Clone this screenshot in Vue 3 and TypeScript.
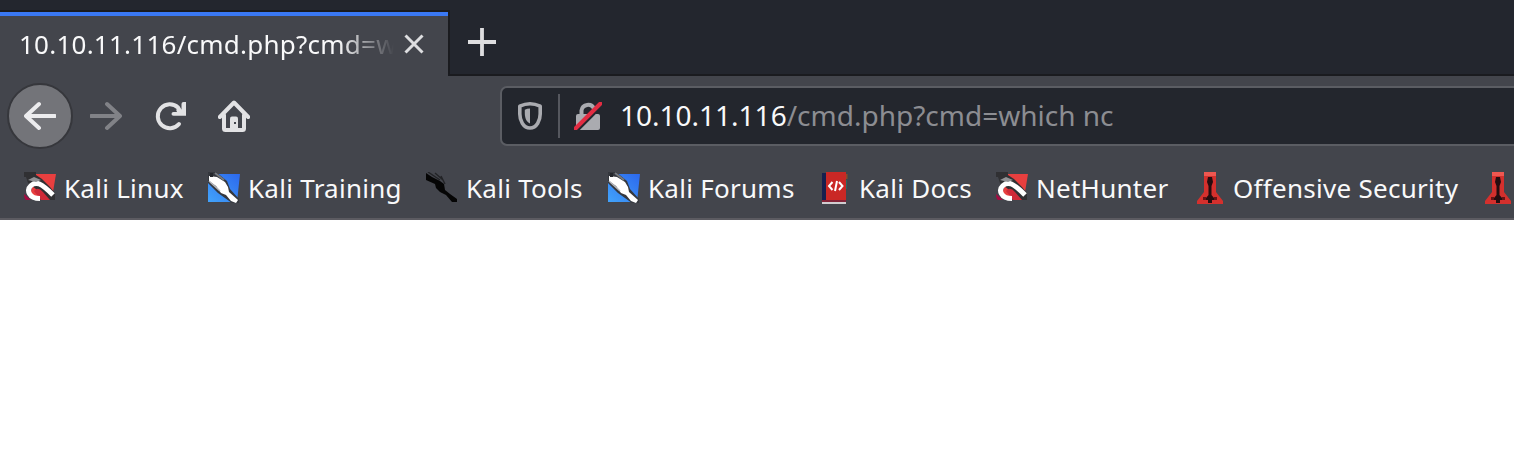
<script setup lang="ts">
type BookmarkIcon = 'hunter' | 'dragon' | 'tools' | 'book' | 'tower'

interface Bookmark {
  label: string
  icon: BookmarkIcon
  width: number
}

const bookmarks: Bookmark[] = [
  { label: 'Kali Linux', icon: 'hunter', width: 184 },
  { label: 'Kali Training', icon: 'dragon', width: 218 },
  { label: 'Kali Tools', icon: 'tools', width: 182 },
  { label: 'Kali Forums', icon: 'dragon', width: 211 },
  { label: 'Kali Docs', icon: 'book', width: 177 },
  { label: 'NetHunter', icon: 'hunter', width: 197 },
  { label: 'Offensive Security', icon: 'tower', width: 288 },
  { label: '', icon: 'tower', width: 40 },
]
</script>

<template>
  <div class="browser">
    <header class="tabs">
      <div class="tab">
        <span class="tab-title">10.10.11.116/cmd.php?cmd=w</span>
        <svg class="close" viewBox="0 0 20 20"><path d="M1.5 1.5 18.5 18.5M18.5 1.5 1.5 18.5" /></svg>
      </div>
      <svg class="plus" viewBox="0 0 28 28"><path d="M14 0V28M0 14H28" /></svg>
    </header>

    <nav class="toolbar">
      <button class="back" aria-label="Back">
        <svg viewBox="0 0 32 32"><path d="M31 16H2M15 4 2 16 15 28" /></svg>
      </button>
      <svg class="forward" viewBox="0 0 32 32"><path d="M1 16H30M17 4 30 16 17 28" /></svg>
      <svg class="reload" viewBox="0 0 32 32">
        <path class="line" d="M24 24A12 12 0 1 1 23 7.5L25 11" />
        <path class="solid" d="M31 2V15.8H18.5Q16.5 15.8 16.5 14T18.5 12H22L21 9.5H26.5V4Q26.5 2 28.5 2Z" />
      </svg>
      <svg class="home" viewBox="0 0 32 32">
        <path class="line" d="M1.8 17 16 2.5 30.2 17M6 15V28.5Q6 30 7.5 30H24.5Q26 30 26 28.5V15" />
        <path class="solid" d="M12 31V18.5Q12 16.5 14 16.5H18Q20 16.5 20 18.5V31Z" />
        <path class="knob" d="M16 22H18V24H16Z" />
      </svg>
      <div class="address">
        <svg class="shield" viewBox="0 0 24 28">
          <path class="line" d="M12 1.8Q17 1.8 22.2 4.2V12C22.2 18 19 26 12 26S1.8 18 1.8 12V4.2Q7 1.8 12 1.8Z" />
          <path class="solid" d="M12 6.5V21.5C8.2 20 6.8 15.5 6.8 11V7.7Q9 6.5 12 6.5Z" />
        </svg>
        <span class="divider"></span>
        <svg class="lock" viewBox="0 0 28 28">
          <path class="shackle" d="M7.5 13V8.5A6.5 6.5 0 0 1 20 7V13" />
          <rect class="solid" x="2" y="12" width="24" height="16" rx="2" />
          <path class="gap" d="M1 30 29 2" />
          <path class="slash" d="M1.5 26.5 26.5 1.5" />
        </svg>
        <span class="url"><span class="host">10.10.11.116</span>/cmd.php?cmd=which nc</span>
      </div>
    </nav>

    <div class="bookmarks">
      <div v-for="(b, i) in bookmarks" :key="i" class="bookmark" :style="{ width: b.width + 'px' }">
        <svg v-if="b.icon === 'hunter'" class="icon" viewBox="0 0 32 32">
          <path fill="#e83f3f" d="M12 2H32L28 26H5Z" />
          <path fill="#303033" d="M0 0H12V3L18 7 26 15 31 21V28H24L12 17 4 11 2 5H0Z" />
          <path fill="#a70b42" d="M0 22 7 28H2Q0 27 0 22Z" />
          <path fill="#cf2a38" d="M10 19Q14 14 19 20L26 28H17Z" />
          <path fill="none" stroke="#fff" stroke-width="5" d="M16 26.5C5 26.5 2 18 7 13.5S17 11 29 23" />
          <path fill="#929396" d="M4 8 10 5 17 8 12 10Z" />
        </svg>
        <svg v-else-if="b.icon === 'dragon'" class="icon" viewBox="0 0 32 32">
          <defs>
            <linearGradient :id="'blue' + i" x1="0" y1="1" x2="1" y2="0">
              <stop offset="0" stop-color="#42a3fa" /><stop offset="1" stop-color="#2c68ed" />
            </linearGradient>
          </defs>
          <path :fill="'url(#blue' + i + ')'" d="M4 2H32L29 30H0V10Z" />
          <path fill="#35383e" d="M0 0H8L19 9 22 17 31 27V31H24L10 21 0 11Z" />
          <path fill="#fff" d="M1 4 9 5 17 10 20 15 21 20 30 28 28 31 23 29 18 23 13 21 8 14 1 9Z" />
          <path fill="none" stroke="#777a80" stroke-width="2" d="M7 1 16 8" />
          <path fill="none" stroke="#b7bac0" stroke-width="1.5" d="M1 9 12 19" />
          <path fill="#24262b" d="M2 1H5V5H2Z" />
        </svg>
        <svg v-else-if="b.icon === 'tools'" class="icon" viewBox="0 0 32 32">
          <path fill="#050505" d="M0 1 6 5 14 9 18 12 19 18 24 22 31 27V30H26L20 23 14 20 10 16 9 12 0 8Z" />
          <path fill="none" stroke="#222326" stroke-width="1.4" d="M2 0 14 8M9 1 17 8M15 4 19 12" />
        </svg>
        <svg v-else-if="b.icon === 'book'" class="icon" viewBox="0 0 32 32">
          <path fill="#17204e" d="M3 1H7V29H3Z" />
          <path fill="#ca2825" d="M7 0H27V29H7Z" />
          <path fill="#852337" d="M3 28H27V30H3Z" />
          <path fill="#d0cdd0" d="M3 30H27V32H3Z" />
          <path fill="#8c4c2b" d="M27 2H28.5V7H27Z" /><path fill="#276a60" d="M27 8H28V17H27Z" />
          <path fill="none" stroke="#fff" stroke-width="2" d="M13.5 10 10 14 13.5 18M20 10 23.5 14 20 18M18 9 16 19" />
        </svg>
        <svg v-else class="icon" viewBox="0 0 32 32">
          <path fill="#d4302d" d="M11 0H23V20L30 29V32H4V29L11 20Z" />
          <path fill="#ef5750" d="M11 0H23V4H11Z" />
          <path fill="#250d10" d="M15 5H19L20 10 18.5 14V23L21 26V28H19V31H15V28H13V26L15.5 23V14L14 10Z" />
          <path fill="#671315" d="M10 25H13V28H10ZM21 25H24V28H21Z" />
        </svg>
        <span class="label">{{ b.label }}</span>
      </div>
    </div>
    <main class="page"></main>
  </div>
</template>

<style>
html, body { margin: 0; overflow: hidden; background: #fff; }
</style>

<style scoped>
* { box-sizing: border-box; }
svg { display: block; flex: none; }
.browser {
  width: 1514px; height: 464px; overflow: hidden;
  display: flex; flex-direction: column;
  font-family: "Noto Sans", sans-serif; color: #f9f9fa;
}
.tabs {
  flex: none; height: 76px; padding-top: 10px; display: flex; align-items: flex-start;
  background: linear-gradient(#1a1b1f, #1a1b1f) bottom / 100% 2px no-repeat, #23262e;
}
.tab {
  height: 66px; width: 450px; padding: 0 0 0 19px;
  border-top: 2px solid #1a1b1f; border-right: 2px solid #1a1b1f;
  background: linear-gradient(#3a78f2, #3a78f2) top / 100% 4px no-repeat, #43454c;
  display: flex; align-items: center;
}
.tab-title {
  width: 375px; overflow: hidden; white-space: nowrap; font-size: 26px; line-height: 36px; letter-spacing: 0.24px;
  mask-image: linear-gradient(to right, #000 319px, transparent 375px);
}
.close { width: 20px; height: 20px; margin-left: 10px; }
.close path { fill: none; stroke: #dedee0; stroke-width: 3; }
.plus { width: 28px; height: 28px; margin: 18px 0 0 18px; }
.plus path { stroke: #dedee0; stroke-width: 3.8; }
.toolbar {
  flex: none; height: 80px; padding-left: 7px; display: flex; align-items: center; background: #43454c;
}
.back {
  flex: none; width: 66px; height: 66px; padding: 0; border: 2px solid #36373c; border-radius: 50%;
  background: #737479; display: flex; align-items: center; justify-content: center;
}
.back svg, .forward, .reload, .home { width: 32px; height: 32px; }
.back path, .forward path { fill: none; stroke: #ececee; stroke-width: 4; stroke-linecap: round; stroke-linejoin: round; }
.forward { margin-left: 17px; }
.forward path { stroke: #818287; }
.reload { margin-left: 33px; }
.home { margin-left: 31px; }
.reload .line, .home .line { fill: none; stroke: #e2e2e4; stroke-width: 4; stroke-linecap: round; stroke-linejoin: round; }
.reload .solid, .home .solid { fill: #e2e2e4; }
.knob { fill: #43454c; }
.address {
  width: 1050px; height: 60px; flex: none; margin-left: 250px; padding-left: 16px;
  border: 2px solid #5b5d63; border-radius: 7px; background: #23262d;
  display: flex; align-items: center;
}
.shield { width: 24px; height: 28px; }
.shield .line { fill: none; stroke: #aaabb0; stroke-width: 3.6; stroke-linejoin: round; }
.shield .solid, .lock .solid { fill: #aaabb0; }
.divider { width: 2px; height: 44px; margin: 0 14px 0 16px; background: #55575e; }
.lock { width: 28px; height: 28px; }
.shackle { fill: none; stroke: #aaabb0; stroke-width: 4; }
.gap { stroke: #23262d; stroke-width: 4; }
.slash { stroke: #e22c42; stroke-width: 4; stroke-linecap: round; }
.url { margin: -2px 0 0 18px; white-space: pre; font-size: 28px; line-height: 40px; color: #8c8d92; }
.host { color: #f9f9fa; }
.bookmarks {
  flex: none; height: 64px; padding: 2px 0 0 24px; display: flex; align-items: center;
  background: #43454c; border-bottom: 2px solid #5c5b61;
}
.bookmark { flex: none; display: flex; align-items: center; white-space: nowrap; }
.icon { width: 32px; height: 32px; }
.label { margin: 0 0 0 8px; font-size: 26px; line-height: 36px; letter-spacing: 0.27px; }
.page { flex: 1; background: #fff; }
</style>
